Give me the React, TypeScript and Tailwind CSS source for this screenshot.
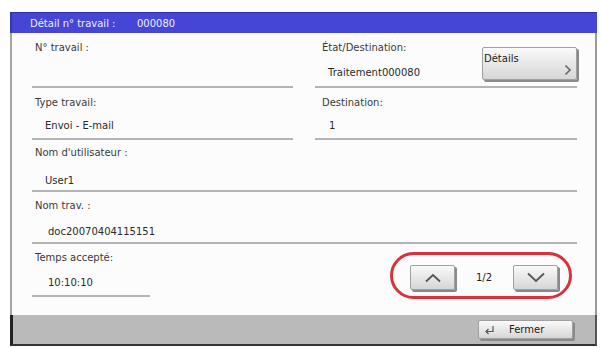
import React from "react";

const font = { fontFamily: '"DejaVu Sans", Verdana, sans-serif' };

function Field({
  label,
  value,
  h,
  labelTop,
  valueTop,
  labelPl = "pl-[3px]",
  valuePl = "pl-[13px]",
}: {
  label: string;
  value?: string;
  h: string;
  labelTop: string;
  valueTop: string;
  labelPl?: string;
  valuePl?: string;
}) {
  return (
    <div className={`${h} border-b-2 border-[#b4b4b4] flex flex-col`}>
      <div className={`${labelTop} ${labelPl} h-[14px] leading-[14px] text-[10px] text-[#3a3a3a]`}>{label}</div>
      <div className={`${valueTop} ${valuePl} h-[14px] leading-[14px] text-[10px] text-[#2a2a2a]`}>{value}</div>
    </div>
  );
}

function GrayButton({ className, children }: { className: string; children: React.ReactNode }) {
  return (
    <div
      className={`${className} bg-gradient-to-b from-[#fafafa] to-[#d6d6d6] border border-[#a0a0a0] shadow-[2px_2px_0_#8a8a8a] rounded-[2px]`}
    >
      {children}
    </div>
  );
}

export default function App() {
  return (
    <div className="w-[601px] h-[348px] bg-white overflow-hidden pt-[12px] pl-[10px]" style={font}>
      <div className="w-[587px] h-[334px] flex flex-col">
        {/* title bar */}
        <div className="h-[21px] bg-[#4646d6] border-t border-[#2f2fa8] border-l-2 border-l-[#3434b8] flex items-center text-[10px] text-[#eef0ff]">
          <span className="pl-[18px] w-[125px]">Détail n° travail :</span>
          <span>000080</span>
        </div>

        {/* content */}
        <div className="relative h-[282px] bg-[#fcfcfc] border-l-2 border-l-[#a4a4a4] border-r-2 border-r-[#9a9a9a] pl-[20px] pr-[18px]">
          <div className="grid grid-cols-[261px_262px] gap-x-[22px]">
            <Field label="N° travail :" h="h-[55px]" labelTop="mt-[8px]" valueTop="mt-[11px]" />
            <div className="h-[55px] border-b-2 border-[#b4b4b4] flex justify-between">
              <div className="flex flex-col">
                <div className="mt-[8px] pl-[7px] h-[14px] leading-[14px] text-[10px] text-[#3a3a3a]">État/Destination:</div>
                <div className="mt-[11px] pl-[13px] h-[14px] leading-[14px] text-[10px] text-[#2a2a2a]">Traitement000080</div>
              </div>
              <GrayButton className="mt-[14px] w-[95px] h-[33px] relative">
                <span className="absolute left-[1px] top-[3px] text-[10px] text-[#222]">Détails</span>
                <svg className="absolute right-[4px] bottom-[3px]" width="8" height="12" viewBox="0 0 8 12">
                  <path d="M1.5 1.5 L6 6 L1.5 10.5" fill="none" stroke="#666" strokeWidth="1.6" />
                </svg>
              </GrayButton>
            </div>

            <Field label="Type travail:" value="Envoi - E-mail" h="h-[52px]" labelTop="mt-[8px]" valueTop="mt-[9px]" />
            <Field
              label="Destination:"
              value="1"
              h="h-[52px]"
              labelTop="mt-[8px]"
              valueTop="mt-[9px]"
              labelPl="pl-[7px]"
              valuePl="pl-[14px]"
            />
          </div>

          <Field label="Nom d'utilisateur :" value="User1" h="h-[52px]" labelTop="mt-[6px]" valueTop="mt-[14px]" />
          <Field label="Nom trav. :" value="doc20070404115151" h="h-[52px]" labelTop="mt-[7px]" valueTop="mt-[12px]" valuePl="pl-[16px]" />

          <div className="flex">
            <div className="w-[118px]">
              <Field label="Temps accepté:" value="10:10:10" h="h-[53px]" labelTop="mt-[7px]" valueTop="mt-[11px]" valuePl="pl-[16px]" />
            </div>
            <div className="ml-[260px] mt-[21px] flex items-center h-[25px]">
              <GrayButton className="w-[45px] h-[25px] flex items-center justify-center">
                <svg width="18" height="10" viewBox="0 0 18 10">
                  <path d="M2 8.5 L9 2 L16 8.5" fill="none" stroke="#555" strokeWidth="1.8" />
                </svg>
              </GrayButton>
              <span className="w-[58px] text-center text-[10px] text-[#222]">1/2</span>
              <GrayButton className="w-[45px] h-[25px] flex items-center justify-center">
                <svg width="20" height="11" viewBox="0 0 20 11">
                  <path d="M2 1.5 L10 9 L18 1.5" fill="none" stroke="#555" strokeWidth="1.8" />
                </svg>
              </GrayButton>
            </div>
          </div>

          {/* red highlight oval */}
          <div className="absolute left-[378px] top-[219px] w-[182px] h-[47px] rounded-full border-[3px] border-[#d8323c]" />
        </div>

        {/* bottom bar */}
        <div className="h-[31px] bg-[#bababa] border-l-[3px] border-l-[#222] border-r-2 border-r-[#555] border-b-2 border-b-[#333] flex justify-end items-start pr-[22px] pt-[5px]">
          <GrayButton className="w-[95px] h-[19px] flex items-center">
            <svg className="ml-[5px]" width="11" height="10" viewBox="0 0 11 10">
              <path d="M9 1 L9 6.5 L2 6.5 M4.5 4 L2 6.5 L4.5 9" fill="none" stroke="#555" strokeWidth="1.2" />
            </svg>
            <span className="ml-[14px] text-[10px] text-[#222]">Fermer</span>
          </GrayButton>
        </div>
      </div>
    </div>
  );
}
